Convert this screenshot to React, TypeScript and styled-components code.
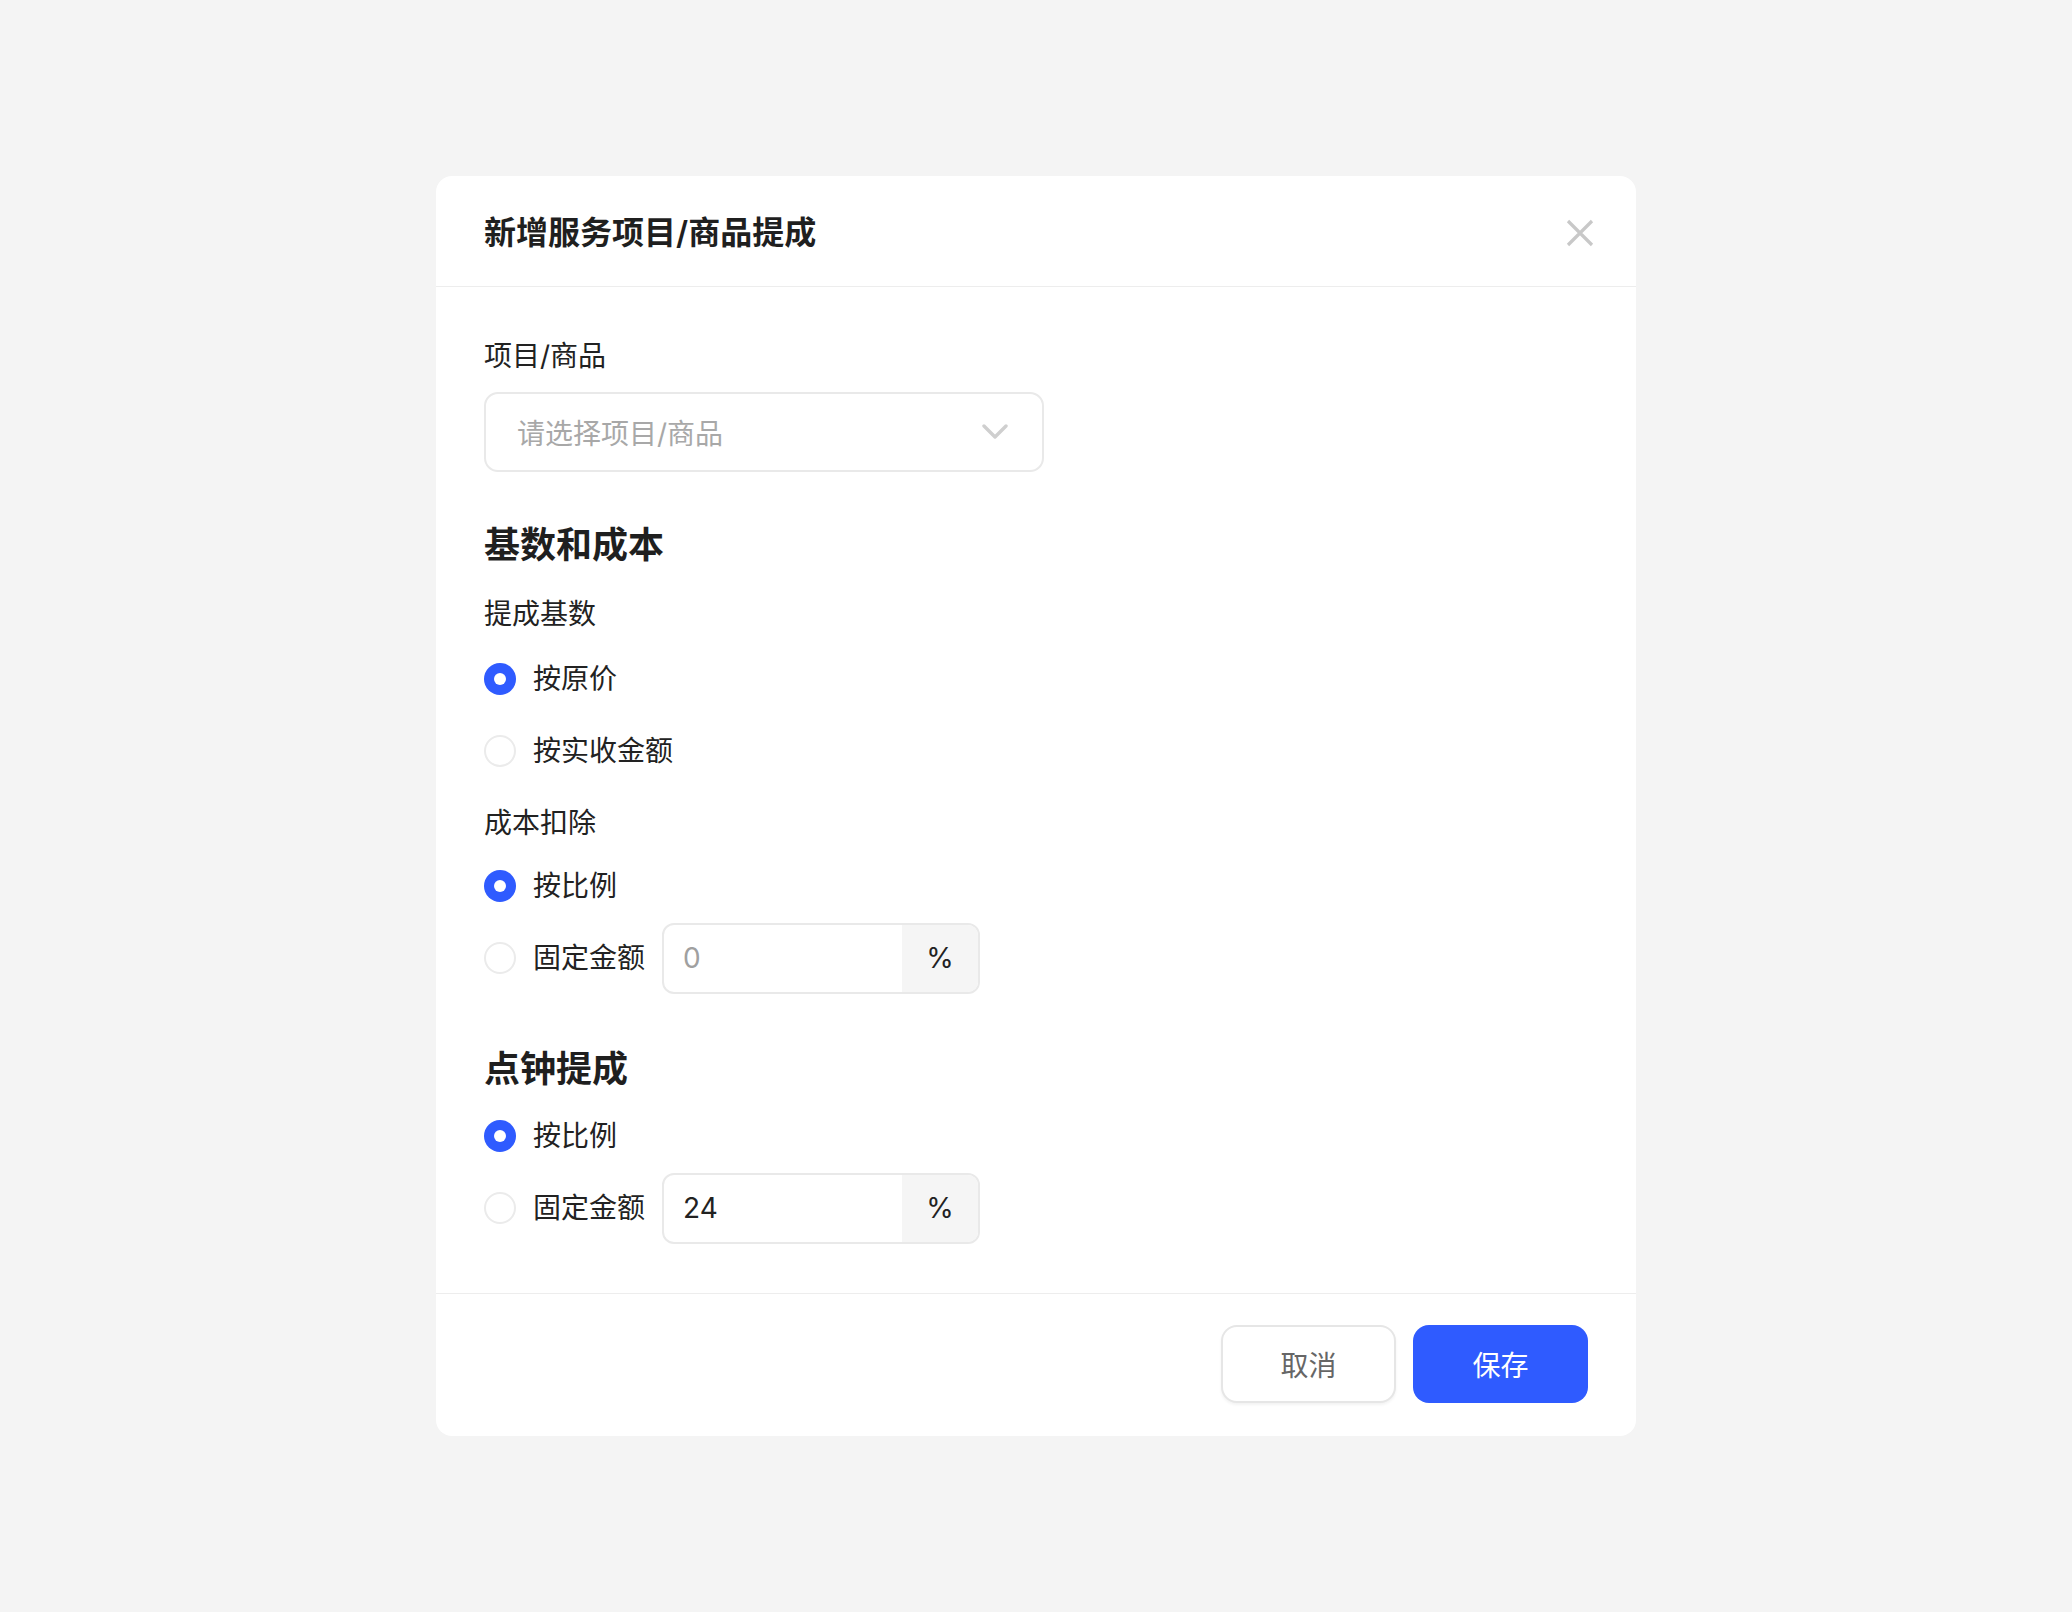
import React from "react";
import styled, { createGlobalStyle } from "styled-components";

const GlobalStyle = createGlobalStyle`
  html, body {
    margin: 0;
    padding: 0;
    background: #f4f4f4;
  }
  body {
    font-family: "Inter", "Noto Sans CJK SC", sans-serif;
    color: #222;
  }
  * { box-sizing: border-box; }
`;

const Page = styled.div`
  width: 2072px;
  min-height: 1612px;
  display: flex;
  justify-content: center;
  padding-top: 176px;
  background: #f4f4f4;
`;

const Modal = styled.div`
  width: 1200px;
  height: 1260px;
  background: #fff;
  border-radius: 16px;
  display: flex;
  flex-direction: column;
  overflow: hidden;
`;

const Header = styled.div`
  height: 111px;
  flex: none;
  border-bottom: 1px solid #ededed;
  display: flex;
  align-items: center;
  justify-content: space-between;
  padding: 3px 40px 0 48px;
`;

const Title = styled.h1`
  margin: 0;
  font-size: 32px;
  font-weight: 600;
  color: #1f1f1f;
  line-height: 40px;
`;

const CloseButton = styled.button`
  width: 32px;
  height: 32px;
  border: none;
  background: none;
  padding: 0;
  display: flex;
  align-items: center;
  justify-content: center;
  cursor: pointer;
`;

const Body = styled.div`
  flex: 1;
  padding: 49px 48px 47px;
  display: flex;
  flex-direction: column;
  align-items: flex-start;
`;

const FieldLabel = styled.div<{ $mt?: number }>`
  font-size: 28px;
  line-height: 40px;
  height: 40px;
  color: #222;
  margin-top: ${(p) => p.$mt ?? 0}px;
`;

const Select = styled.div`
  margin-top: 16px;
  width: 560px;
  height: 80px;
  border: 2px solid #e9e9e9;
  border-radius: 14px;
  display: flex;
  align-items: center;
  justify-content: space-between;
  padding: 0 34px 0 31px;
`;

const Placeholder = styled.span`
  font-size: 28px;
  color: #a8a8a8;
`;

const SectionTitle = styled.h2<{ $mt: number }>`
  margin: ${(p) => p.$mt}px 0 0;
  font-size: 36px;
  line-height: 50px;
  height: 50px;
  font-weight: 600;
  color: #1f1f1f;
`;

const RadioGroup = styled.div<{ $mt: number }>`
  margin-top: ${(p) => p.$mt}px;
  display: flex;
  flex-direction: column;
`;

const RadioRow = styled.label`
  height: 72px;
  display: flex;
  align-items: center;
  gap: 17px;
  cursor: pointer;
`;

const RadioCircle = styled.span<{ $checked?: boolean }>`
  width: 32px;
  height: 32px;
  border-radius: 50%;
  flex: none;
  display: flex;
  align-items: center;
  justify-content: center;
  background: ${(p) => (p.$checked ? "#2f5bff" : "#fff")};
  border: ${(p) => (p.$checked ? "none" : "2px solid #ebebeb")};
  &::after {
    content: "";
    display: ${(p) => (p.$checked ? "block" : "none")};
    width: 12px;
    height: 12px;
    border-radius: 50%;
    background: #fff;
  }
`;

const RadioText = styled.span`
  font-size: 28px;
  line-height: 40px;
  color: #222;
`;

const InputBox = styled.div`
  width: 318px;
  height: 71px;
  border: 2px solid #e9e9e9;
  border-radius: 12px;
  display: flex;
  overflow: hidden;
`;

const InputValue = styled.span<{ $placeholder?: boolean }>`
  flex: 1;
  display: flex;
  align-items: center;
  padding-left: 19px;
  font-size: 28px;
  color: ${(p) => (p.$placeholder ? "#a0a0a0" : "#222")};
`;

const Suffix = styled.span`
  width: 76px;
  flex: none;
  background: #f5f5f5;
  display: flex;
  align-items: center;
  justify-content: center;
  font-size: 28px;
  color: #222;
`;

const Footer = styled.div`
  flex: none;
  border-top: 1px solid #ededed;
  padding: 31px 48px 33px;
  display: flex;
  justify-content: flex-end;
  gap: 17px;
`;

const Button = styled.button<{ $primary?: boolean }>`
  width: 175px;
  height: 78px;
  border-radius: 16px;
  font-family: "Inter", "Noto Sans CJK SC", sans-serif;
  font-size: 28px;
  cursor: pointer;
  border: ${(p) => (p.$primary ? "none" : "2px solid #e6e6e6")};
  background: ${(p) => (p.$primary ? "#2f5bff" : "#fff")};
  color: ${(p) => (p.$primary ? "#fff" : "#666")};
  box-shadow: ${(p) => (p.$primary ? "none" : "0 2px 3px rgba(0,0,0,0.05)")};
`;

const CloseIcon = () => (
  <svg width="28" height="28" viewBox="0 0 28 28">
    <path d="M2 2 L26 26 M26 2 L2 26" stroke="#c8c8c8" strokeWidth="3.2" fill="none" />
  </svg>
);

const Chevron = () => (
  <svg width="26" height="16" viewBox="0 0 26 16">
    <path d="M2 2 L13 13 L24 2" stroke="#cfcfcf" strokeWidth="3.4" fill="none" strokeLinecap="round" strokeLinejoin="round" />
  </svg>
);

type Opt = { label: string; checked?: boolean; input?: { value: string; placeholder?: boolean } };

const Radios = ({ options, mt }: { options: Opt[]; mt: number }) => (
  <RadioGroup $mt={mt}>
    {options.map((o) => (
      <RadioRow key={o.label}>
        <RadioCircle $checked={o.checked} />
        <RadioText>{o.label}</RadioText>
        {o.input && (
          <InputBox>
            <InputValue $placeholder={o.input.placeholder}>{o.input.value}</InputValue>
            <Suffix>%</Suffix>
          </InputBox>
        )}
      </RadioRow>
    ))}
  </RadioGroup>
);

export default function App() {
  return (
    <>
      <GlobalStyle />
      <Page>
        <Modal>
          <Header>
            <Title>新增服务项目/商品提成</Title>
            <CloseButton aria-label="关闭">
              <CloseIcon />
            </CloseButton>
          </Header>
          <Body>
            <FieldLabel>项目/商品</FieldLabel>
            <Select>
              <Placeholder>请选择项目/商品</Placeholder>
              <Chevron />
            </Select>

            <SectionTitle $mt={48}>基数和成本</SectionTitle>
            <FieldLabel $mt={24}>提成基数</FieldLabel>
            <Radios mt={9} options={[{ label: "按原价", checked: true }, { label: "按实收金额" }]} />
            <FieldLabel $mt={16}>成本扣除</FieldLabel>
            <Radios
              mt={7}
              options={[
                { label: "按比例", checked: true },
                { label: "固定金额", input: { value: "0", placeholder: true } },
              ]}
            />

            <SectionTitle $mt={50}>点钟提成</SectionTitle>
            <Radios
              mt={6}
              options={[
                { label: "按比例", checked: true },
                { label: "固定金额", input: { value: "24" } },
              ]}
            />
          </Body>
          <Footer>
            <Button>取消</Button>
            <Button $primary>保存</Button>
          </Footer>
        </Modal>
      </Page>
    </>
  );
}
